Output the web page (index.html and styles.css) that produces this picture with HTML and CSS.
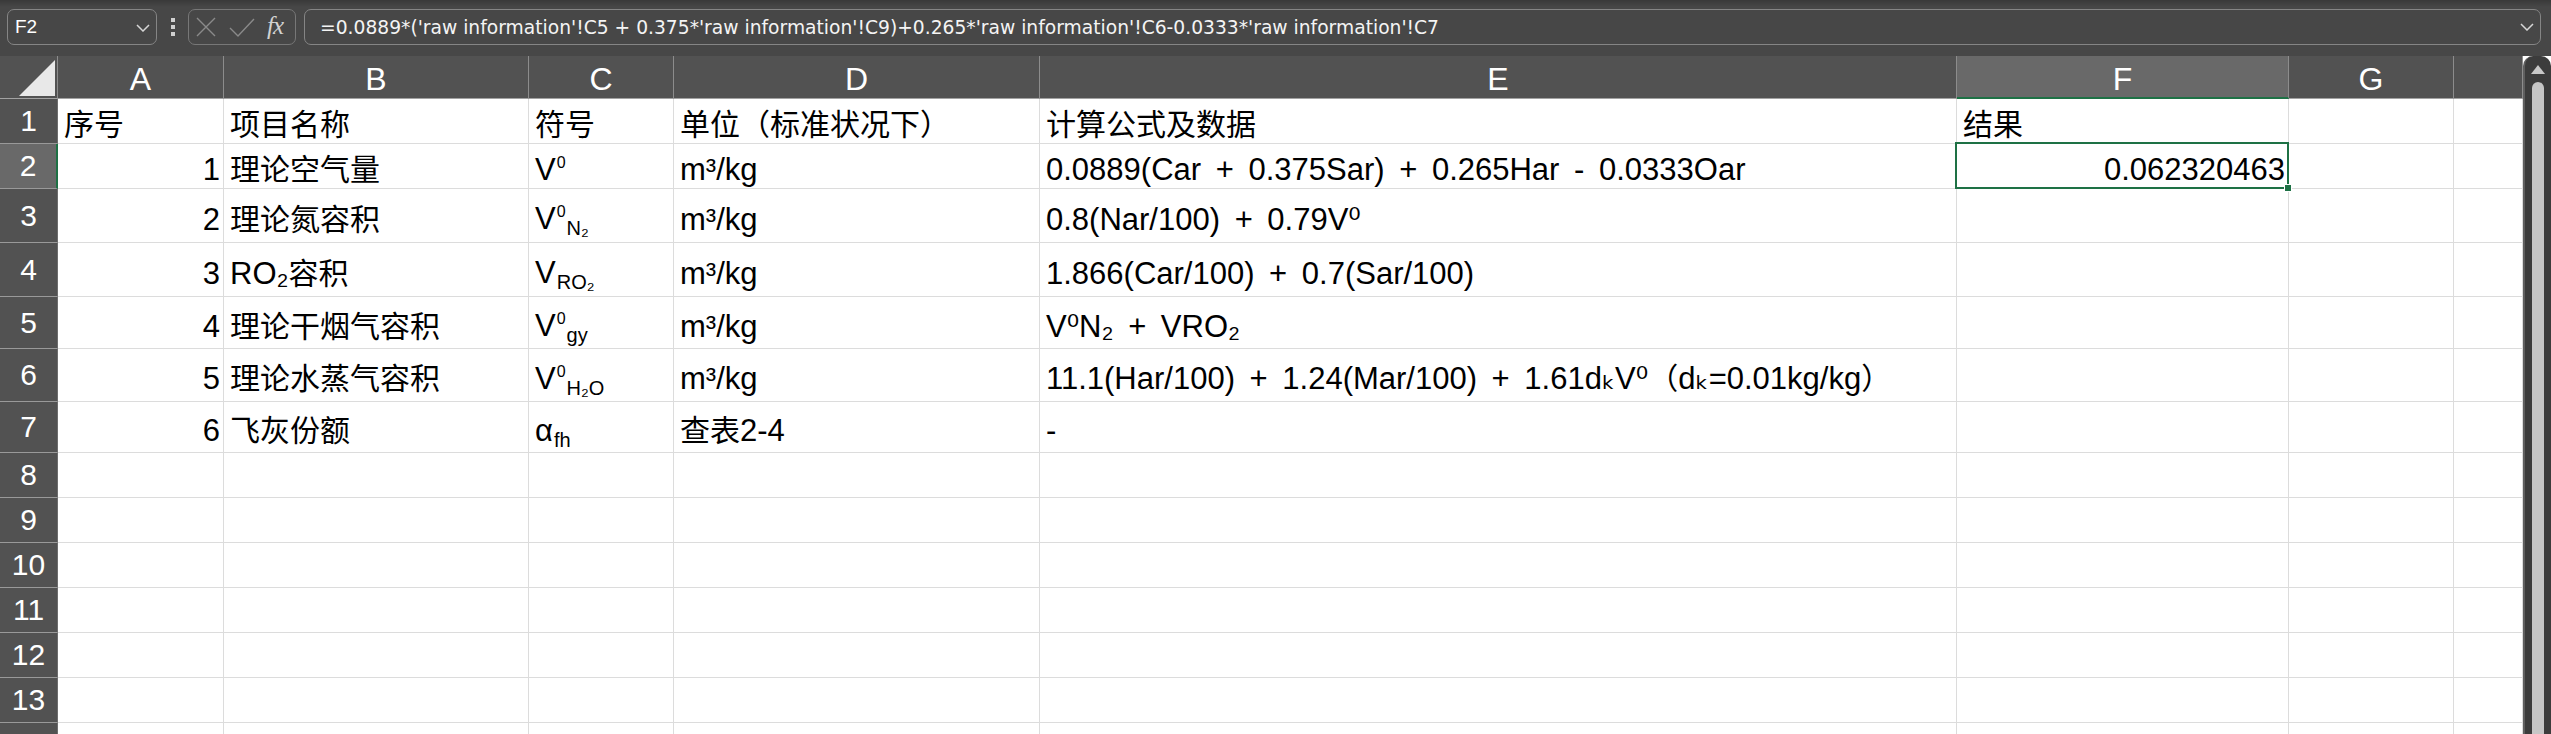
FILE: index.html
```html
<!DOCTYPE html>
<html lang="zh-CN">
<head>
<meta charset="utf-8">
<title>Sheet</title>
<link rel="stylesheet" href="styles.css">
</head>
<body>
<div class="app">
  <div class="toolbar">
    <div class="namebox">
      <span class="cellref">F2</span>
      <svg class="chev" width="14" height="8" viewBox="0 0 14 8"><polyline points="1,1 7,7 13,1" fill="none" stroke="#d6d6d6" stroke-width="1.5"/></svg>
    </div>
    <div class="dots"><i></i><i></i><i></i></div>
    <div class="cmdbox">
      <svg class="xicon" width="20" height="20" viewBox="0 0 20 20"><path d="M1 1 L19 19 M19 1 L1 19" stroke="#8a8a8a" stroke-width="1.4" fill="none"/></svg>
      <svg class="vicon" width="26" height="19" viewBox="0 0 26 19"><polyline points="1,10 9,18 25,1" stroke="#8a8a8a" stroke-width="1.4" fill="none"/></svg>
      <span class="fx">fx</span>
    </div>
    <div class="fbox">
      <span class="ftext">=0.0889*('raw information'!C5 + 0.375*'raw information'!C9)+0.265*'raw information'!C6-0.0333*'raw information'!C7</span>
      <svg class="chev2" width="14" height="8" viewBox="0 0 14 8"><polyline points="1,1 7,7 13,1" fill="none" stroke="#d6d6d6" stroke-width="1.5"/></svg>
    </div>
  </div>
  <div class="main">
    <div class="sheet">
      <div class="corner"><svg width="58" height="43" viewBox="0 0 58 43"><polygon points="55,4 55,40 19,40" fill="#e8e8e8"/></svg></div>
      <div class="ch">A</div><div class="ch">B</div><div class="ch">C</div><div class="ch">D</div><div class="ch">E</div><div class="ch ch-sel">F</div><div class="ch">G</div><div class="ch"></div>

      <div class="rh">1</div>
      <div class="c"><span class="zh">序号</span></div>
      <div class="c"><span class="zh">项目名称</span></div>
      <div class="c"><span class="zh">符号</span></div>
      <div class="c"><span class="zh">单位（标准状况下）</span></div>
      <div class="c"><span class="zh">计算公式及数据</span></div>
      <div class="c"><span class="zh">结果</span></div>
      <div class="c"></div><div class="c"></div>

      <div class="rh rh-sel">2</div>
      <div class="c num">1</div>
      <div class="c"><span class="zh">理论空气量</span></div>
      <div class="c"><span class="t">V<span class="sup">0</span></span></div>
      <div class="c">m³/kg</div>
      <div class="c formula">0.0889(Car + 0.375Sar) + 0.265Har - 0.0333Oar</div>
      <div class="c num sel">0.062320463</div>
      <div class="c"></div><div class="c"></div>

      <div class="rh">3</div>
      <div class="c num">2</div>
      <div class="c"><span class="zh">理论氮容积</span></div>
      <div class="c"><span class="t">V<span class="sup">0</span><span class="sub">N₂</span></span></div>
      <div class="c">m³/kg</div>
      <div class="c formula">0.8(Nar/100) + 0.79V⁰</div>
      <div class="c"></div><div class="c"></div><div class="c"></div>

      <div class="rh">4</div>
      <div class="c num">3</div>
      <div class="c"><span class="t">RO₂<span class="zh">容积</span></span></div>
      <div class="c"><span class="t">V<span class="sub">RO₂</span></span></div>
      <div class="c">m³/kg</div>
      <div class="c formula">1.866(Car/100) + 0.7(Sar/100)</div>
      <div class="c"></div><div class="c"></div><div class="c"></div>

      <div class="rh">5</div>
      <div class="c num">4</div>
      <div class="c"><span class="zh">理论干烟气容积</span></div>
      <div class="c"><span class="t">V<span class="sup">0</span><span class="sub">gy</span></span></div>
      <div class="c">m³/kg</div>
      <div class="c formula">V⁰N₂ + VRO₂</div>
      <div class="c"></div><div class="c"></div><div class="c"></div>

      <div class="rh">6</div>
      <div class="c num">5</div>
      <div class="c"><span class="zh">理论水蒸气容积</span></div>
      <div class="c"><span class="t">V<span class="sup">0</span><span class="sub">H₂O</span></span></div>
      <div class="c">m³/kg</div>
      <div class="c formula"><span class="t">11.1(Har/100) + 1.24(Mar/100) + 1.61dₖV⁰<span class="zh">（</span>dₖ=0.01kg/kg<span class="zh">）</span></span></div>
      <div class="c"></div><div class="c"></div><div class="c"></div>

      <div class="rh">7</div>
      <div class="c num">6</div>
      <div class="c"><span class="zh">飞灰份额</span></div>
      <div class="c"><span class="t">α<span class="sub">fh</span></span></div>
      <div class="c"><span class="t"><span class="zh">查表</span>2-4</span></div>
      <div class="c">-</div>
      <div class="c"></div><div class="c"></div><div class="c"></div>

      <div class="rh">8</div><div class="c"></div><div class="c"></div><div class="c"></div><div class="c"></div><div class="c"></div><div class="c"></div><div class="c"></div><div class="c"></div>
      <div class="rh">9</div><div class="c"></div><div class="c"></div><div class="c"></div><div class="c"></div><div class="c"></div><div class="c"></div><div class="c"></div><div class="c"></div>
      <div class="rh">10</div><div class="c"></div><div class="c"></div><div class="c"></div><div class="c"></div><div class="c"></div><div class="c"></div><div class="c"></div><div class="c"></div>
      <div class="rh">11</div><div class="c"></div><div class="c"></div><div class="c"></div><div class="c"></div><div class="c"></div><div class="c"></div><div class="c"></div><div class="c"></div>
      <div class="rh">12</div><div class="c"></div><div class="c"></div><div class="c"></div><div class="c"></div><div class="c"></div><div class="c"></div><div class="c"></div><div class="c"></div>
      <div class="rh">13</div><div class="c"></div><div class="c"></div><div class="c"></div><div class="c"></div><div class="c"></div><div class="c"></div><div class="c"></div><div class="c"></div>
      <div class="rh"></div><div class="c"></div><div class="c"></div><div class="c"></div><div class="c"></div><div class="c"></div><div class="c"></div><div class="c"></div><div class="c"></div>
    </div>
    <div class="vscroll">
      <svg class="uparrow" width="14" height="9" viewBox="0 0 14 9"><polygon points="7,0 14,9 0,9" fill="#c8c8c8"/></svg>
      <div class="thumb"></div>
    </div>
  </div>
</div>
</body>
</html>
```

FILE: styles.css
```css
html, body {
  margin: 0;
  padding: 0;
}
body {
  width: 2551px;
  height: 734px;
  overflow: hidden;
  background: #ffffff;
  font-family: "Liberation Sans", "DejaVu Sans", "Noto Sans CJK SC", sans-serif;
}
.app {
  display: flex;
  flex-direction: column;
  height: 734px;
}

/* ---------- toolbar ---------- */
.toolbar {
  flex: none;
  height: 56px;
  box-sizing: border-box;
  padding: 9px 10px 0 7px;
  display: flex;
  align-items: flex-start;
  background: linear-gradient(#393939 0, #474747 7px, #474747 100%);
}
.namebox {
  width: 150px;
  height: 36px;
  box-sizing: border-box;
  border: 1px solid #858585;
  border-radius: 7px;
  display: flex;
  align-items: center;
  padding: 0 6px 0 7px;
}
.cellref {
  color: #ffffff;
  font-family: "Liberation Sans", sans-serif;
  font-size: 19px;
  flex: 1;
}
.chev { margin-top: 1px; }
.dots {
  width: 4px;
  height: 36px;
  margin: 0 13px 0 14px;
  display: flex;
  flex-direction: column;
  justify-content: center;
  gap: 3px;
}
.dots i {
  display: block;
  width: 4px;
  height: 4px;
  background: #d0d0d0;
}
.cmdbox {
  width: 108px;
  height: 36px;
  box-sizing: border-box;
  border: 1px solid #777777;
  border-radius: 7px;
  display: flex;
  align-items: center;
  padding-left: 7px;
}
.vicon { margin-left: 13px; }
.fx {
  margin-left: 12px;
  font-family: "Liberation Serif", "DejaVu Serif", serif;
  font-style: italic;
  font-size: 25px;
  color: #d2d2d2;
  letter-spacing: -1px;
  line-height: 1;
  margin-top: -3px;
}
.fbox {
  flex: 1;
  margin-left: 8px;
  height: 36px;
  box-sizing: border-box;
  border: 1px solid #858585;
  border-radius: 7px;
  display: flex;
  align-items: center;
  padding: 0 6px 0 15px;
}
.ftext {
  flex: 1;
  color: #f4f4f4;
  font-family: "DejaVu Sans", sans-serif;
  font-size: 18.7px;
  white-space: nowrap;
}

/* ---------- grid ---------- */
.main {
  flex: 1;
  display: flex;
  overflow: hidden;
}
.sheet {
  flex: 1;
  display: grid;
  grid-template-columns: 58px 166px 305px 145px 366px 917px 332px 165px 1fr;
  grid-template-rows: 43px 45px 45px 54px 54px 52px 53px 51px 45px 45px 45px 45px 45px 45px 45px;
  overflow: hidden;
}
.corner {
  background: #525252;
  border-right: 1px solid #8c8c8c;
  border-bottom: 1px solid #a2a2a2;
  box-sizing: border-box;
  overflow: hidden;
}
.corner svg { display: block; }
.ch {
  background: #525252;
  color: #ffffff;
  font-size: 32px;
  line-height: 36px;
  display: flex;
  justify-content: center;
  align-items: center;
  padding-top: 4px;
  box-sizing: border-box;
  border-right: 1px solid #8c8c8c;
  border-bottom: 1px solid #a2a2a2;
}
.ch-sel {
  background: #696969;
  border-bottom: 2px solid #1e7145;
}
.rh {
  background: #525252;
  color: #ffffff;
  font-size: 30px;
  display: flex;
  justify-content: center;
  align-items: center;
  box-sizing: border-box;
  border-right: 1px solid #6e6e6e;
  border-bottom: 1px solid #999999;
}
.rh-sel {
  background: #696969;
  border-right: 2px solid #1e7145;
}
.c {
  position: relative;
  box-sizing: border-box;
  border-right: 1px solid #dcdcdc;
  border-bottom: 1px solid #dcdcdc;
  display: flex;
  align-items: center;
  padding: 8px 6px 0 6px;
  font-size: 31px;
  line-height: 36px;
  color: #000000;
  white-space: nowrap;
}
.t { display: block; }
.num {
  justify-content: flex-end;
  padding-right: 3px;
}
.formula { word-spacing: 6px; }
.zh { font-size: 30px; }
.sup {
  font-size: 16px;
  line-height: 1;
  vertical-align: 12px;
  margin-left: 1px;
}
.sub {
  font-size: 20px;
  line-height: 1;
  vertical-align: -6px;
  margin-left: 1px;
}
.sel::after {
  content: "";
  position: absolute;
  left: -2px;
  top: -2px;
  right: -1px;
  bottom: -1px;
  border: 2px solid #1e7145;
  pointer-events: none;
}
.sel::before {
  content: "";
  position: absolute;
  right: -4px;
  bottom: -4px;
  width: 6px;
  height: 6px;
  background: #1e7145;
  border: 1px solid #ffffff;
  z-index: 2;
}

/* ---------- scrollbar ---------- */
.vscroll {
  flex: none;
  width: 28px;
  box-sizing: border-box;
  background: #3c3c3c;
  border-left: 2px solid #5f5f5f;
  border-radius: 10px 10px 0 0;
  display: flex;
  flex-direction: column;
  align-items: center;
}
.uparrow {
  margin-top: 9px;
}
.thumb {
  margin-top: 8px;
  width: 12px;
  flex: 1;
  background: #c6c6c6;
  border-radius: 6px 6px 0 0;
}
```
